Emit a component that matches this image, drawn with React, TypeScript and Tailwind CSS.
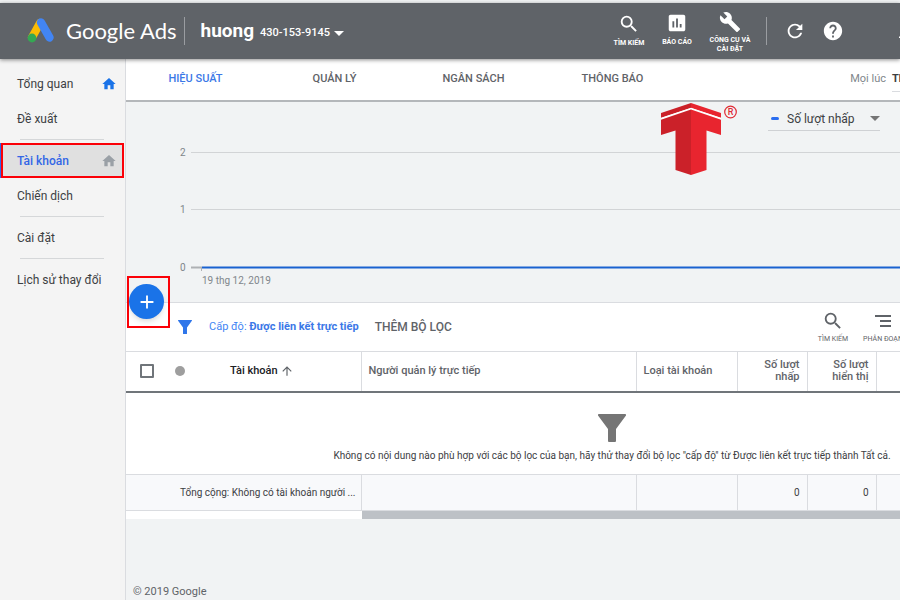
import { useState } from "react";
import type { ReactNode } from "react";
import {
  MdAdd,
  MdArrowUpward,
  MdAssessment,
  MdBuild,
  MdHelp,
  MdHome,
  MdNotifications,
  MdRefresh,
  MdSearch,
} from "react-icons/md";

interface NavItem {
  label: string;
  home?: boolean;
  dividerAfter?: boolean;
}

const navItems: NavItem[] = [
  { label: "Tổng quan", home: true },
  { label: "Đề xuất", dividerAfter: true },
  { label: "Tài khoản", home: true },
  { label: "Chiến dịch", dividerAfter: true },
  { label: "Cài đặt", dividerAfter: true },
  { label: "Lịch sử thay đổi" },
];

const tabs = ["HIỆU SUẤT", "QUẢN LÝ", "NGÂN SÁCH", "THÔNG BÁO"];

const gridLines = [
  { value: 2, y: 15 },
  { value: 1, y: 72 },
  { value: 0, y: 130 },
];

function AdsLogo() {
  return (
    <svg width="28" height="26" viewBox="0 0 28 26" aria-hidden="true">
      <path d="M13 5 L5 19.500" stroke="#fbbc04" strokeWidth="8" strokeLinecap="round" />
      <path d="M14 4.500 L22.500 19.500" stroke="#4285f4" strokeWidth="8.400" strokeLinecap="round" />
      <circle cx="5" cy="20" r="4.400" fill="#34a853" />
    </svg>
  );
}

function Caret({ className }: { className?: string }) {
  return (
    <svg width="10" height="5" viewBox="0 0 10 5" className={className} aria-hidden="true">
      <path d="M0 0h10L5 5z" fill="currentColor" />
    </svg>
  );
}

function Funnel({ className }: { className?: string }) {
  return (
    <svg viewBox="0 0 28 28" className={className} aria-hidden="true">
      <path
        d="M1 0h26a1 1 0 0 1 .8 1.700L18 15v12a1 1 0 0 1-1 1h-6a1 1 0 0 1-1-1V15L.2 1.700A1 1 0 0 1 1 0z"
        fill="currentColor"
      />
    </svg>
  );
}

function BrandMark() {
  return (
    <svg width="78" height="74" viewBox="0 0 78 74" aria-hidden="true">
      <path d="M0 10 30 0v5L0 15z" fill="#cb2129" />
      <path d="M60 10 30 0v5l30 10z" fill="#e8252f" />
      <path d="M0 14.800 30 4.800l30 10v2L30 6.500 0 16.800z" fill="#fff" />
      <path d="M0 16.800 30 6.500V72l-15.500-5V27.500L0 32z" fill="#cb2129" />
      <path d="M60 16.800 30 6.500V72l15.500-5V27.500L60 32z" fill="#e8252f" />
      <circle cx="69.500" cy="9" r="5.800" fill="none" stroke="#e02a33" strokeWidth="1.200" />
      <text x="69.500" y="12" textAnchor="middle" fontSize="9" fontWeight="500" fill="#e02a33">
        R
      </text>
    </svg>
  );
}

function HeaderAction({ icon, label, className }: { icon: ReactNode; label: string; className: string }) {
  return (
    <button className={`flex flex-col items-center ${className}`}>
      {icon}
      <span className="text-[7px] leading-[9px] font-bold">{label}</span>
    </button>
  );
}

function Header() {
  return (
    <header className="relative z-10 flex h-14 items-center overflow-hidden bg-[#5f6368] text-white">
      <a href="#" className="flex items-center pl-[27px]">
        <AdsLogo />
        <span className="ml-[11px] font-['Lato'] text-[22px] leading-7 whitespace-nowrap">Google Ads</span>
      </a>
      <div className="ml-2 h-7 w-px bg-[#9a9da1]" />
      <button className="ml-[15px] flex items-center whitespace-nowrap">
        <span className="text-[19px] leading-6 font-bold">huong</span>
        <span className="mt-1 ml-1.5 text-[11px] font-medium">430-153-9145</span>
        <Caret className="mt-1 ml-1" />
      </button>

      <div className="ml-auto -mr-[26px] flex h-full shrink-0 items-center">
        <HeaderAction
          className="w-12 self-start pt-[10px]"
          icon={<MdSearch className="mb-1 size-[22px]" />}
          label="TÌM KIẾM"
        />
        <HeaderAction
          className="w-12 self-start pt-[9px]"
          icon={<MdAssessment className="mb-1 size-[22px]" />}
          label="BÁO CÁO"
        />
        <HeaderAction
          className="w-[58px] self-start px-[7px] pt-2"
          icon={<MdBuild className="mb-[3px] size-[22px]" />}
          label="CÔNG CỤ VÀ CÀI ĐẶT"
        />
        <div className="mr-[9px] ml-[7px] h-7 w-px bg-[#9a9da1]" />
        <button aria-label="Làm mới" className="flex w-[38px] justify-center">
          <MdRefresh className="size-[22px]" />
        </button>
        <button aria-label="Trợ giúp" className="flex w-[38px] justify-center">
          <MdHelp className="size-[22px]" />
        </button>
        <button aria-label="Thông báo" className="ml-9 flex w-[38px] justify-center">
          <MdNotifications className="size-6" />
        </button>
      </div>
    </header>
  );
}

function Sidebar() {
  const [current, setCurrent] = useState("Tài khoản");

  return (
    <nav className="w-[126px] shrink-0 border-r border-[#dadce0] bg-[#f4f4f4] pt-[7px] text-xs text-[#3c4043]">
      {navItems.map((item) => {
        const active = item.label === current;
        return (
          <div key={item.label}>
            <a
              href="#"
              onClick={() => setCurrent(item.label)}
              className={
                active
                  ? "mr-px ml-px flex h-[35px] items-center justify-between border-2 border-[#fb0007] bg-[#e0e0e0] pr-[5px] pl-[14px] font-medium text-[#3367e6] shadow-[-1px_0_0_#3367e6]"
                  : "flex h-[35px] items-center justify-between pr-2 pl-[17px]"
              }
            >
              {item.label}
              {item.home && (
                <MdHome className={active ? "size-4 text-[#9aa0a6]" : "size-4 text-[#1a73e8]"} />
              )}
            </a>
            {item.dividerAfter && <hr className="my-[3px] mr-[21px] ml-5 h-px border-[#d5d7d9]" />}
          </div>
        );
      })}
    </nav>
  );
}

function TabBar() {
  const [current, setCurrent] = useState(tabs[0]);

  return (
    <div className="flex h-[43px] overflow-hidden border-b-2 border-[#b4b7ba] bg-white text-[11px]">
      {tabs.map((tab) => (
        <button
          key={tab}
          onClick={() => setCurrent(tab)}
          className={
            tab === current
              ? "-mb-0.5 w-[139px] shrink-0 border-b-2 border-[#1a66d6] font-medium text-[#3b78e7]"
              : "w-[139px] shrink-0 font-medium text-[#5f6368]"
          }
        >
          {tab}
        </button>
      ))}
      <div className="-mr-10 ml-auto flex shrink-0 items-center gap-1.5 whitespace-nowrap">
        <span className="text-[#80868b]">Mọi lúc</span>
        <button className="w-12 border-b border-[#dadce0] py-1 text-left font-bold text-[#3c4043]">
          Tháng
        </button>
      </div>
    </div>
  );
}

function Chart() {
  return (
    <section className="relative border-b border-[#dadce0]">
      <div className="flex h-[35px] items-start justify-end pt-[5px] pr-5">
        <label className="relative flex h-6 w-28 items-center border-b border-[#cfd1d4]">
          <span className="ml-[3px] h-[3px] w-2 rounded-full bg-[#2a6df0]" />
          <select
            aria-label="Chỉ số"
            className="ml-2 w-20 appearance-none bg-transparent text-xs text-[#3c4043] outline-none"
          >
            <option>Số lượt nhấp</option>
          </select>
          <Caret className="pointer-events-none absolute right-0 text-[#757575]" />
        </label>
      </div>

      <svg width="100%" height="165" className="block text-[10px]" role="img" aria-label="Số lượt nhấp">
        {gridLines.map((line) => (
          <g key={line.value}>
            <text x="54" y={line.y + 4} fill="#80868b">
              {line.value}
            </text>
            <line x1="65" x2="100%" y1={line.y + 0.5} y2={line.y + 0.5} stroke="#d2d4d6" />
          </g>
        ))}
        <line x1="65" x2="76" y1="130.500" y2="130.500" stroke="#aeb1b4" strokeWidth="2" />
        <line x1="75.500" x2="75.500" y1="130" y2="134" stroke="#aeb1b4" />
        <line x1="76" x2="100%" y1="130.500" y2="130.500" stroke="#1a62d0" strokeWidth="2" />
        <text x="76" y="147" fill="#80868b">
          19 thg 12, 2019
        </text>
      </svg>

      <div className="absolute top-[1px] right-[161px]">
        <BrandMark />
      </div>

      {/* add button sits across the lower edge of the chart */}
      <div className="absolute -bottom-[26px] left-px z-10 flex h-[52px] w-[43px] border-2 border-[#fb0007] pt-[6px]">
        <button
          aria-label="Thêm"
          className="flex size-[35px] shrink-0 items-center justify-center rounded-full bg-[#1a73e8] text-white shadow-md"
        >
          <MdAdd className="size-[22px]" />
        </button>
      </div>
    </section>
  );
}

function FilterBar() {
  return (
    <div className="flex h-12 items-center overflow-hidden bg-white text-[11px] whitespace-nowrap">
      <Funnel className="ml-[52px] size-[14px] shrink-0 text-[#2f76ea]" />
      <button className="ml-[17px] text-[#4285f4]">
        Cấp độ: <span className="font-bold text-[#3b78e7]">Được liên kết trực tiếp</span>
      </button>
      <button className="ml-4 text-xs font-medium text-[#5f6368]">THÊM BỘ LỌC</button>
      <div className="-mr-2 ml-auto flex shrink-0 text-[7px] leading-[9px] text-[#5f6368]">
        <button className="flex w-[50px] flex-col items-center gap-[3px]">
          <MdSearch className="size-[22px]" />
          TÌM KIẾM
        </button>
        <button className="flex w-[50px] flex-col items-center gap-[3px]">
          <svg width="22" height="22" viewBox="0 0 22 22" aria-hidden="true">
            <path d="M3 6h16M8 11h11M8 16h11" stroke="#5f6368" strokeWidth="2" />
          </svg>
          PHÂN ĐOẠN
        </button>
      </div>
    </div>
  );
}

function AccountsTable() {
  const cell = "border-r border-[#dadce0]";

  return (
    <div className="overflow-hidden">
      <table className="w-full min-w-[972px] table-fixed border-collapse bg-white text-[11px] text-[#5f6368]">
        <colgroup>
          <col className="w-[235px]" />
          <col className="w-[275px]" />
          <col className="w-[101px]" />
          <col className="w-[70px]" />
          <col className="w-[69px]" />
          <col />
        </colgroup>
        <thead>
          <tr className="h-10 border-t border-b-2 border-t-[#dadce0] border-b-[#70757a] text-left">
            <th className={`${cell} font-medium text-[#202124]`}>
              <div className="flex items-center pl-[14px]">
                <input
                  type="checkbox"
                  aria-label="Chọn tất cả"
                  className="size-[14px] appearance-none rounded-[1px] border-2 border-[#70757a] bg-white"
                />
                <span className="ml-[21px] size-[10px] rounded-full bg-[#9e9e9e]" />
                <span className="ml-[45px]">Tài khoản</span>
                <MdArrowUpward className="ml-0.5 size-[14px] text-[#5f6368]" />
              </div>
            </th>
            <th className={`${cell} pl-[7px] font-medium`}>Người quản lý trực tiếp</th>
            <th className={`${cell} pl-[7px] font-medium`}>Loại tài khoản</th>
            <th className={`${cell} pr-[7px] pl-5 text-right leading-3 font-medium`}>Số lượt nhấp</th>
            <th className={`${cell} pr-[7px] pl-5 text-right leading-3 font-medium`}>Số lượt hiển thị</th>
            <th />
          </tr>
        </thead>
        <tbody className="text-[10px] text-[#3c4043]">
          <tr className="h-[83px]">
            <td colSpan={6} className="pt-2.5 whitespace-nowrap">
              <div className="flex flex-col items-center gap-1.5">
                <Funnel className="size-7 text-[#757575]" />
                <p>
                  Không có nội dung nào phù hợp với các bộ lọc của bạn, hãy thử thay đổi bộ lọc "cấp độ" từ
                  Được liên kết trực tiếp thành Tất cả.
                </p>
              </div>
            </td>
          </tr>
          <tr className="h-9 border-y border-[#dadce0] bg-[#f8f9fb]">
            <td className={`${cell} pr-[5px] text-right whitespace-nowrap`}>
              Tổng cộng: Không có tài khoản người ...
            </td>
            <td className={cell} />
            <td className={cell} />
            <td className={`${cell} pr-[7px] text-right`}>0</td>
            <td className={`${cell} pr-[7px] text-right`}>0</td>
            <td />
          </tr>
        </tbody>
      </table>
      <div className="flex h-2 bg-white">
        <div className="ml-[236px] flex-1 bg-[#bdc1c6]" />
      </div>
    </div>
  );
}

export default function App() {
  return (
    <div className="flex min-h-screen flex-col bg-[#f1f3f4] pt-[3px] font-['Roboto',sans-serif]">
      <div className="relative z-10 shadow-[0_1px_4px_rgba(0,0,0,0.45)]">
        <Header />
      </div>
      <div className="flex flex-1">
        <Sidebar />
        <main className="flex min-w-0 flex-1 flex-col">
          <TabBar />
          <Chart />
          <FilterBar />
          <AccountsTable />
          <footer className="mt-auto pl-[7px] text-[11px] leading-4 text-[#5f6368]">© 2019 Google</footer>
        </main>
      </div>
    </div>
  );
}
